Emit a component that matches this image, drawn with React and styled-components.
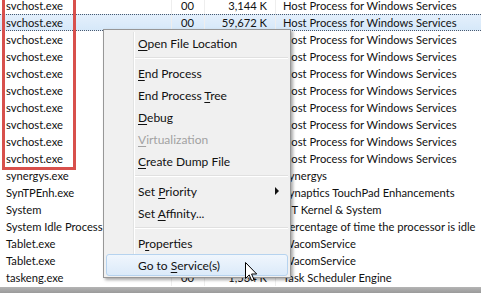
import React from "react";
import styled, { createGlobalStyle } from "styled-components";

const Global = createGlobalStyle`
  html, body { margin: 0; padding: 0; background: #fff; }
  body { overflow: hidden; font-family: Lato, "Open Sans", "DejaVu Sans", sans-serif; }
`;

const Page = styled.div`
  position: relative;
  width: 481px;
  height: 293px;
  overflow: hidden;
  display: flex;
  flex-direction: column;
  background: #fff;
  color: #111;
`;

const List = styled.div`
  flex: 1;
  overflow: hidden;
  margin-top: -3px;
  font-size: 11.2px;
`;

const Row = styled.div`
  display: grid;
  grid-template-columns: 172px 33px 71px 1fr;
  height: 17px;
  box-sizing: border-box;
  line-height: ${(p) => (p.$selected ? "15px" : "17px")};
  white-space: nowrap;
  background: ${(p) => (p.$selected ? "linear-gradient(#e4f0fc, #d6e8f9)" : "transparent")};
  border-top: ${(p) => (p.$selected ? "1px dotted #4a5a70" : "none")};
  border-bottom: ${(p) => (p.$selected ? "1px dotted #4a5a70" : "none")};
`;

const Cell = styled.div`
  overflow: hidden;
  text-align: ${(p) => p.$align || "left"};
  padding: ${(p) => p.$pad || "0"};
  border-right: ${(p) => (p.$last ? "none" : "1px solid #eeeeee")};
`;

const BottomBar = styled.div`
  height: 6px;
  background: linear-gradient(#b4b4b4, #9a9a9a);
`;

const Annotation = styled.div`
  position: absolute;
  left: 2px;
  top: -5px;
  width: 74px;
  height: 175px;
  box-sizing: border-box;
  border: 3px solid #d8504c;
`;

const Menu = styled.div`
  position: absolute;
  left: 103px;
  top: 29px;
  width: 188px;
  box-sizing: border-box;
  padding: 2px 2px 1px;
  border: 1px solid #979797;
  background: #f0f0f0;
  box-shadow: 2px 2px 3px rgba(0, 0, 0, 0.35);
  font-size: 12px;
  &::before {
    content: "";
    position: absolute;
    left: 29px;
    top: 2px;
    bottom: 2px;
    width: 1px;
    background: #e2e3e3;
    border-right: 1px solid #ffffff;
  }
`;

const Item = styled.div`
  position: relative;
  height: 22px;
  box-sizing: border-box;
  display: flex;
  align-items: center;
  padding-left: 31px;
  border-radius: 3px;
  border: 1px solid ${(p) => (p.$hot ? "#b6d3ef" : "transparent")};
  background: ${(p) => (p.$hot ? "linear-gradient(#f0f6fd, #dbeaf9)" : "transparent")};
  color: ${(p) => (p.$disabled ? "#a2a2a2" : "#111")};
  white-space: nowrap;
`;

const Label = styled.span`
  white-space: pre;
`;

const Key = styled.span`
  text-decoration: underline;
  text-underline-offset: 2px;
`;

const Arrow = styled.span`
  margin-left: auto;
  margin-right: 8px;
  width: 0;
  height: 0;
  border-left: 4px solid #111;
  border-top: 4px solid transparent;
  border-bottom: 4px solid transparent;
`;

const Separator = styled.div`
  height: 8px;
  margin-left: 28px;
  display: flex;
  align-items: center;
  &::after {
    content: "";
    flex: 1;
    height: 1px;
    background: #e0e0e0;
    border-bottom: 1px solid #fff;
  }
`;

const CursorWrap = styled.svg`
  position: absolute;
  left: 245px;
  top: 262px;
`;

const HOST = "Host Process for Windows Services";
const rows = [
  ["svchost.exe", "3,144 K", HOST],
  ["svchost.exe", "59,672 K", HOST, true],
  ["svchost.exe", "12,408 K", HOST],
  ["svchost.exe", "4,812 K", HOST],
  ["svchost.exe", "7,236 K", HOST],
  ["svchost.exe", "2,904 K", HOST],
  ["svchost.exe", "18,552 K", HOST],
  ["svchost.exe", "5,120 K", HOST],
  ["svchost.exe", "1,688 K", HOST],
  ["svchost.exe", "3,760 K", HOST],
  ["synergys.exe", "2,216 K", "Synergys"],
  ["SynTPEnh.exe", "3,872 K", "Synaptics TouchPad Enhancements"],
  ["System", "48 K", "NT Kernel & System"],
  ["System Idle Process", "24 K", "Percentage of time the processor is idle"],
  ["Tablet.exe", "2,544 K", "WacomService"],
  ["Tablet.exe", "1,932 K", "WacomService"],
  ["taskeng.exe", "1,534 K", "Task Scheduler Engine"],
];

const menu = [
  { pre: "", key: "O", post: "pen File Location" },
  { sep: true },
  { pre: "", key: "E", post: "nd Process" },
  { pre: "End Process ", key: "T", post: "ree" },
  { pre: "", key: "D", post: "ebug" },
  { pre: "", key: "V", post: "irtualization", disabled: true },
  { pre: "", key: "C", post: "reate Dump File" },
  { sep: true },
  { pre: "Set ", key: "P", post: "riority", arrow: true },
  { pre: "Set ", key: "A", post: "ffinity..." },
  { sep: true },
  { pre: "P", key: "r", post: "operties" },
  { pre: "Go to ", key: "S", post: "ervice(s)", hot: true },
];

export default function App() {
  return (
    <>
      <Global />
      <Page>
        <List>
          {rows.map(([name, mem, desc, sel], i) => (
            <Row key={i} $selected={sel}>
              <Cell $pad="0 0 0 6px">{name}</Cell>
              <Cell $align="right" $pad="0 10px 0 0">00</Cell>
              <Cell $align="right" $pad="0 8px 0 0">{mem}</Cell>
              <Cell $pad="0 0 0 7px" $last>{desc}</Cell>
            </Row>
          ))}
        </List>
        <BottomBar />
        <Annotation />
        <Menu>
          {menu.map((m, i) =>
            m.sep ? (
              <Separator key={i} />
            ) : (
              <Item key={i} $hot={m.hot} $disabled={m.disabled}>
                <Label>
                  {m.pre}
                  <Key>{m.key}</Key>
                  {m.post}
                </Label>
                {m.arrow && <Arrow />}
              </Item>
            )
          )}
        </Menu>
        <CursorWrap width="13" height="20" viewBox="0 0 13 20">
          <path
            d="M0.5 0.5 L0.5 16.5 L4.2 12.9 L6.7 18.7 L9 17.7 L6.6 12 L11.7 12 Z"
            fill="#fff"
            stroke="#000"
            strokeWidth="1"
            strokeLinejoin="miter"
          />
        </CursorWrap>
      </Page>
    </>
  );
}
